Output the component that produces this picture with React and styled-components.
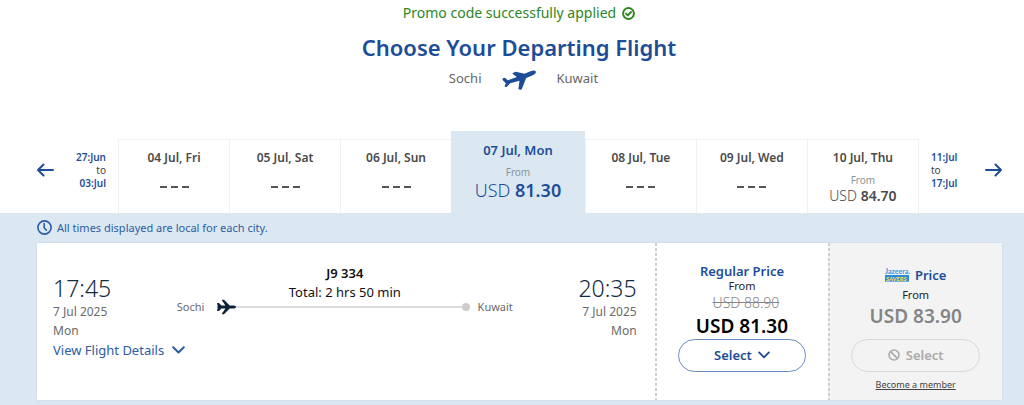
import React from "react";
import styled, { createGlobalStyle } from "styled-components";

const blue = "#1e4d98";
const sky = "#dbe8f2";

const GlobalStyle = createGlobalStyle`
  *, *::before, *::after { box-sizing: border-box; }
  body {
    margin: 0;
    background: ${sky};
    color: #222;
    font-family: "Noto Sans", "Open Sans", sans-serif;
    font-size: 12px;
    line-height: 16px;
  }
  h1, h2, p { margin: 0; }
  button { font: inherit; cursor: pointer; }
  svg { display: block; flex: none; }
`;

const Top = styled.header`
  background: #fff;
  display: flex;
  flex-direction: column;
  align-items: center;
  padding: 3px 0 0 14px;
`;

const Promo = styled.p`
  display: flex;
  align-items: center;
  gap: 6px;
  color: #2e861f;
  font-size: 14px;
  line-height: 20px;
`;

const Title = styled.h1`
  margin-top: 8px;
  color: ${blue};
  font-size: 22px;
  font-weight: 600;
  line-height: 32px;
`;

const Route = styled.div`
  display: grid;
  grid-template-columns: 1fr auto 1fr;
  align-items: center;
  gap: 20px;
  margin-top: 4px;
  height: 26px;
  color: #666;
  font-size: 13px;
`;

const RouteCity = styled.span`
  padding-bottom: 4px;
  text-align: ${(p) => p.$align};
`;

const Calendar = styled.nav`
  display: flex;
  align-items: flex-end;
  padding: 38px 22px 0 37px;
  background: #fff;
`;

const WeekNav = styled.div`
  display: flex;
  flex: ${(p) => (p.$end ? "1 1 0" : "0 0 81px")};
  height: 82px;
  padding-bottom: 4px;
  align-items: center;
  justify-content: space-between;
  ${(p) => (p.$end ? "padding-left: 12px;" : "padding-right: 12px;")}
`;

const ArrowButton = styled.button`
  padding: 0;
  border: 0;
  background: none;
  color: ${blue};
`;

const WeekRange = styled.p`
  color: ${blue};
  font-size: 10px;
  font-weight: 600;
  line-height: 13px;
  text-align: ${(p) => p.$align};
`;

const RangeTo = styled.span`
  display: block;
  color: #444;
  font-weight: 400;
`;

const Days = styled.div`
  display: flex;
  flex: 0 0 83%;
  align-items: flex-end;
`;

const Day = styled.button`
  display: flex;
  flex: ${(p) => (p.$active ? "135 1 0" : "111 1 0")};
  flex-direction: column;
  align-items: center;
  height: ${(p) => (p.$active ? 82 : 74)}px;
  padding: ${(p) => (p.$active ? "11px 0 0" : "10px 0 0")};
  border: 1px solid ${(p) => (p.$active ? sky : "#f1f1f1")};
  border-width: ${(p) => (p.$active ? "0" : "1px 0 0 1px")};
  background: ${(p) => (p.$active ? sky : "#fff")};
  color: ${(p) => (p.$active ? blue : "#4a4a4a")};
  &:last-child { border-right-width: 1px; }
`;

const DayName = styled.span`
  font-size: ${(p) => (p.$active ? 13 : 12)}px;
  font-weight: 600;
  line-height: 16px;
`;

const DayFrom = styled.span`
  margin-top: 6px;
  color: #8d949a;
  font-size: 10px;
  line-height: 16px;
`;

const DayPrice = styled.span`
  font-size: ${(p) => (p.$active ? 18 : 14)}px;
  font-weight: 300;
  line-height: ${(p) => (p.$active ? 20 : 16)}px;
  b { font-weight: 600; }
`;

const Dashes = styled.span`
  display: flex;
  gap: 4px;
  margin-top: 20px;
  i { width: 7px; height: 2px; background: #555; }
`;

const Results = styled.main`
  padding: 6px 22px 5px 37px;
`;

const Notice = styled.p`
  display: flex;
  align-items: center;
  gap: 5px;
  height: 17px;
  margin-bottom: 7px;
  color: #2c5ca3;
  font-size: 11px;
`;

const Card = styled.article`
  display: grid;
  grid-template-columns: 1fr 18% 18%;
  min-height: 157px;
  background: #fff;
  box-shadow: 0 0 2px rgba(30, 77, 152, 0.12);
`;

const Flight = styled.section`
  padding: 20px 18px 0 16px;
`;

const Legs = styled.div`
  display: flex;
  justify-content: space-between;
`;

const Stop = styled.div`
  flex: 0 0 62px;
  padding-top: 12px;
  color: #6a6a6a;
  font-size: 12px;
  line-height: 19px;
  text-align: ${(p) => p.$align};
`;

const Time = styled.p`
  color: #142a40;
  font-size: 23px;
  font-weight: 300;
  line-height: 27px;
`;

const Path = styled.div`
  display: flex;
  flex: 0 1 336px;
  flex-direction: column;
  align-items: center;
  color: #111;
  font-size: 13px;
  line-height: 18px;
`;

const FlightNo = styled.h2`
  font-size: 13px;
  font-weight: 600;
  line-height: 20px;
`;

const Track = styled.div`
  display: flex;
  align-items: center;
  align-self: stretch;
  margin-top: -2px;
  color: #6a6a6a;
  font-size: 11px;
  line-height: 16px;
  svg { margin-left: 12px; }
`;

const Line = styled.i`
  flex: 1;
  height: 2px;
  background: #dcdde1;
`;

const Dot = styled.i`
  width: 8px;
  height: 8px;
  margin-right: 8px;
  border-radius: 50%;
  background: #cecccb;
`;

const DetailsButton = styled.button`
  display: flex;
  align-items: center;
  gap: 8px;
  padding: 0;
  border: 0;
  background: none;
  color: #2c5ca3;
  font-size: 13px;
  line-height: 20px;
`;

const Fare = styled.section`
  display: flex;
  flex-direction: column;
  align-items: center;
  padding: 20px 22px 0 23px;
  background: repeating-linear-gradient(#cfcfcf 0 3px, transparent 3px 5px) left / 2px 100% no-repeat
    ${(p) => (p.$muted ? "#f3f3f3" : "#fff")};
  color: #222;
  font-size: 11px;
  line-height: 14px;
`;

const FareName = styled.h2`
  display: flex;
  align-items: center;
  gap: 4px;
  height: ${(p) => (p.$tall ? 24 : 16)}px;
  margin-bottom: ${(p) => (p.$tall ? 1 : 0)}px;
  color: ${blue};
  font-size: 13px;
  font-weight: 600;
  line-height: 16px;
`;

const OldPrice = styled.s`
  color: #858585;
  font-size: 14px;
  font-weight: 300;
  line-height: 20px;
  margin-left: 8px;
`;

const Price = styled.p`
  margin-top: ${(p) => (p.$muted ? 2 : 1)}px;
  color: ${(p) => (p.$muted ? "#858585" : "#000")};
  font-size: 19px;
  font-weight: 600;
  line-height: 24px;
`;

const SelectButton = styled.button`
  display: flex;
  align-items: center;
  justify-content: center;
  gap: 6px;
  align-self: stretch;
  height: 33px;
  margin-top: ${(p) => (p.disabled ? 11 : 1)}px;
  padding: 0 0 2px;
  border: 1px solid ${(p) => (p.disabled ? "#d8d8d8" : "#6a8bc2")};
  border-radius: 17px;
  background: none;
  color: ${(p) => (p.disabled ? "#aaa" : blue)};
  font-size: 13px;
  font-weight: 600;
`;

const MemberLink = styled.a`
  margin-top: 6px;
  color: #444;
  font-size: 9px;
  line-height: 14px;
`;

const Stroke = ({ w, h, box, width = 2, children }) => (
  <svg width={w} height={h} viewBox={box} fill="none" stroke="currentColor" strokeWidth={width} strokeLinecap="round" strokeLinejoin="round" aria-hidden="true">
    {children}
  </svg>
);

const Check = () => (
  <Stroke w={13} h={13} box="0 0 12 12" width={1.8}>
    <circle cx="6" cy="6" r="5" />
    <path d="M3.7 6.1l1.7 1.6 2.9-3.1" />
  </Stroke>
);

const Departing = () => (
  <svg width="35" height="20" viewBox="36 34 104 60" fill={blue} aria-hidden="true">
    <path d="M38 59l6-2 9 8 27-10-12-9q-2-2 1-4l8-3 26 6 20-8q12-4 14 2 2 6-9 11l-20 8-13 33q-1 2-4 2l-5-1q-2 0-1-3l3-23-28 8-10 10q-1 2-3 1l-3-1q-1-1 0-3l3-7-9-9q-2-3 0-5z" />
  </svg>
);

const Plane = () => (
  <svg width="20" height="16" viewBox="0 0 20 16" fill="#0d2238" aria-hidden="true">
    <path d="M1 4h2l2.4 2.5h4L6 1.4V.8h2l5.7 5.7h4.1c1.5 0 2.2.8 2.2 1.5s-.7 1.5-2.2 1.5h-4.1L8 15.2H6v-.6l3.4-5.1h-4L3 12H1l.8-3.4L.6 8l1.2-.6z" />
  </svg>
);

const Clock = () => (
  <Stroke w={15} h={15} box="0 0 15 15" width={1.6}>
    <circle cx="7.5" cy="7.5" r="6.6" />
    <path d="M7.2 3.6v4.2l2.2 2.4" />
  </Stroke>
);

const Arrow = ({ right }) => (
  <Stroke w={17} h={14} box="0 0 17 14" width={2}>
    <path d={right ? "M1 7h15M10.5 1.5L16 7l-5.5 5.5" : "M16 7H1M6.5 1.5L1 7l5.5 5.5"} />
  </Stroke>
);

const Chevron = ({ small }) => (
  <Stroke w={small ? 12 : 13} h={8} box="0 0 13 8" width={2}>
    <path d="M1.2 1.2l5.3 5.3 5.3-5.3" />
  </Stroke>
);

const Blocked = () => (
  <Stroke w={12} h={12} box="0 0 12 12" width={1.6}>
    <circle cx="6" cy="6" r="5" />
    <path d="M2.6 2.6l6.8 6.8" />
  </Stroke>
);

const SaversLogo = () => (
  <svg width="26" height="15" viewBox="0 0 26 15" role="img" aria-label="Jazeera Savers">
    <text x="0" y="5.6" fontFamily="Lato, sans-serif" fontSize="7" fontWeight="900" fill="#3a9be0">Jazeera.</text>
    <path d="M0 7h24v6.6H0z" fill="#2b8bd6" />
    <text x="1" y="12.5" fontFamily="Lato, sans-serif" fontSize="6" fontWeight="900" fontStyle="italic" fill="#f5dc4c">SAVERS</text>
  </svg>
);

const days = [
  { name: "04 Jul, Fri" },
  { name: "05 Jul, Sat" },
  { name: "06 Jul, Sun" },
  { name: "07 Jul, Mon", price: "81.30", active: true },
  { name: "08 Jul, Tue" },
  { name: "09 Jul, Wed" },
  { name: "10 Jul, Thu", price: "84.70" },
];

export default function App() {
  return (
    <>
      <GlobalStyle />
      <Top>
        <Promo>Promo code successfully applied <Check /></Promo>
        <Title>Choose Your Departing Flight</Title>
        <Route>
          <RouteCity $align="right">Sochi</RouteCity>
          <Departing />
          <RouteCity $align="left">Kuwait</RouteCity>
        </Route>
      </Top>
      <Calendar aria-label="Departure dates">
        <WeekNav>
          <ArrowButton aria-label="Previous week"><Arrow /></ArrowButton>
          <WeekRange $align="right">27:Jun<RangeTo>to</RangeTo>03:Jul</WeekRange>
        </WeekNav>
        <Days>
          {days.map((d) => (
            <Day key={d.name} $active={d.active}>
              <DayName $active={d.active}>{d.name}</DayName>
              {d.price ? (
                <>
                  <DayFrom>From</DayFrom>
                  <DayPrice $active={d.active}>USD <b>{d.price}</b></DayPrice>
                </>
              ) : (
                <Dashes><i /><i /><i /></Dashes>
              )}
            </Day>
          ))}
        </Days>
        <WeekNav $end>
          <WeekRange $align="left">11:Jul<RangeTo>to</RangeTo>17:Jul</WeekRange>
          <ArrowButton aria-label="Next week"><Arrow right /></ArrowButton>
        </WeekNav>
      </Calendar>
      <Results>
        <Notice><Clock />All times displayed are local for each city.</Notice>
        <Card>
          <Flight>
            <Legs>
              <Stop $align="left">
                <Time>17:45</Time>
                <p>7 Jul 2025</p>
                <p>Mon</p>
              </Stop>
              <Path>
                <FlightNo>J9 334</FlightNo>
                <p>Total: 2 hrs 50 min</p>
                <Track>Sochi<Plane /><Line /><Dot />Kuwait</Track>
              </Path>
              <Stop $align="right">
                <Time>20:35</Time>
                <p>7 Jul 2025</p>
                <p>Mon</p>
              </Stop>
            </Legs>
            <DetailsButton>View Flight Details <Chevron /></DetailsButton>
          </Flight>
          <Fare>
            <FareName>Regular Price</FareName>
            <p>From</p>
            <OldPrice>USD 88.90</OldPrice>
            <Price>USD 81.30</Price>
            <SelectButton>Select <Chevron small /></SelectButton>
          </Fare>
          <Fare $muted>
            <FareName $tall><SaversLogo />Price</FareName>
            <p>From</p>
            <Price $muted>USD 83.90</Price>
            <SelectButton disabled><Blocked /> Select</SelectButton>
            <MemberLink href="#member">Become a member</MemberLink>
          </Fare>
        </Card>
      </Results>
    </>
  );
}
